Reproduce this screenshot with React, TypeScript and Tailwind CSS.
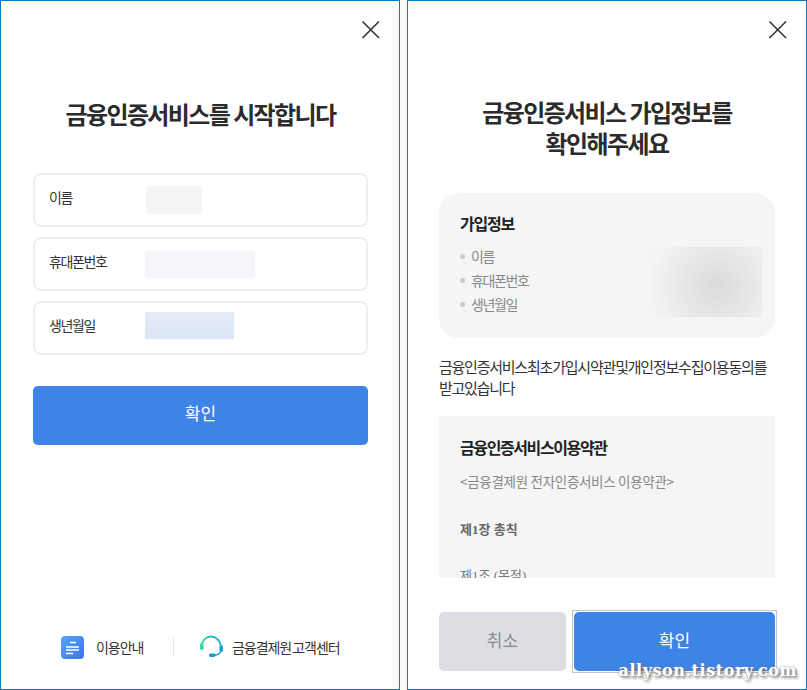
import React from 'react';

const kr = 'font-["Noto_Sans_CJK_KR","Noto_Sans",sans-serif]';

const CloseIcon: React.FC = () => (
  <svg width="20" height="20" viewBox="0 0 20 20" fill="none">
    <path d="M1.5 1.5L18 18M18 1.5L1.5 18" stroke="#333" strokeWidth="1.6" />
  </svg>
);

const Field: React.FC<{ label: string; maskClass: string }> = ({ label, maskClass }) => (
  <div className="flex items-center h-[54px] border-2 border-[#eceeef] rounded-lg pl-[14px]">
    <span className="w-[96px] pb-[5px] text-[14px] tracking-[-1.4px] text-[#333]">{label}</span>
    <div className={maskClass}></div>
  </div>
);

const DocIcon: React.FC = () => (
  <svg width="23" height="23" viewBox="0 0 23 23">
    <defs>
      <linearGradient id="doc" x1="0" y1="0" x2="1" y2="1">
        <stop offset="0" stopColor="#55a4f8" />
        <stop offset="1" stopColor="#3f74e6" />
      </linearGradient>
    </defs>
    <rect width="23" height="23" rx="4" fill="url(#doc)" />
    <path d="M9 6.5H15M5 11H18M5 14H18M5 17.5H12" stroke="#fff" strokeWidth="1.3" />
  </svg>
);

const HeadsetIcon: React.FC = () => (
  <svg width="24" height="24" viewBox="0 0 24 24" fill="none">
    <defs>
      <linearGradient id="hs" x1="0" y1="0" x2="1" y2="0">
        <stop offset="0" stopColor="#2fd99c" />
        <stop offset="1" stopColor="#12a5d0" />
      </linearGradient>
    </defs>
    <path d="M2.8 11C3 5.5 7 1.5 12 1.5C17 1.5 21 5.5 21.6 10" stroke="url(#hs)" strokeWidth="1.8" />
    <rect x="1" y="8" width="3.5" height="7" rx="1.7" fill="#2ed9a0" />
    <rect x="20.5" y="10" width="3.5" height="7" rx="1.7" fill="#12a5d0" />
    <path d="M22 16C21 19 18 20 15 20" stroke="#12a0cf" strokeWidth="1.4" />
    <rect x="10" y="18.5" width="6.5" height="3.5" rx="1.7" fill="#129fcf" />
  </svg>
);

const StartPanel: React.FC = () => (
  <div className="w-[400px] h-[690px] shrink-0 border border-[#0078c8] flex flex-col pl-[32px] pr-[31px]">
    <div className="flex justify-end pt-[19px] -mr-[13px]">
      <CloseIcon />
    </div>
    <h1 className="mt-[56px] text-center text-[24px] leading-[36px] font-bold tracking-[-1.6px] text-[#2b2b2b]">
      금융인증서비스를 시작합니다
    </h1>
    <div className="mt-[41px] flex flex-col gap-[10px]">
      <Field label="이름" maskClass="ml-[1px] w-[56px] h-[28px] bg-[#f5f5f5]" />
      <Field label="휴대폰번호" maskClass="w-[110px] h-[27px] bg-[#f5f6f9]" />
      <Field label="생년월일" maskClass="mb-[6px] w-[89px] h-[27px] bg-gradient-to-b from-[#e6ecf6] to-[#d9e5f6]" />
    </div>
    <button className="mt-[31px] h-[59px] pb-[5px] rounded-[5px] bg-[#3d84e6] text-white text-[17px]">확인</button>
    <div className="mt-auto mb-[30px] flex items-center pl-[28px] text-[14px] tracking-[-1.05px] [word-spacing:-1px] text-[#333]">
      <DocIcon />
      <span className="ml-[12px] w-[77px]">이용안내</span>
      <div className="w-[1px] h-[18px] bg-[#e6e6e6]"></div>
      <div className="ml-[25px]"><HeadsetIcon /></div>
      <span className="ml-[9px]">금융결제원 고객센터</span>
    </div>
  </div>
);

const ConfirmPanel: React.FC = () => (
  <div className="relative w-[400px] h-[690px] shrink-0 border border-[#0078c8] flex flex-col px-[31px]">
    <div className="flex justify-end pt-[19px] -mr-[13px]">
      <CloseIcon />
    </div>
    <h1 className="mt-[56px] text-center text-[24px] leading-[31px] font-bold tracking-[-1.6px] text-[#2b2b2b]">
      금융인증서비스 가입정보를
      <br />
      확인해주세요
    </h1>
    <div className="mt-[35px] h-[145px] rounded-[20px] bg-[#f5f5f5] flex justify-between items-start pl-[21px] pr-[13px] pt-[18px]">
      <div>
        <p className="text-[16px] leading-[24px] font-bold tracking-[-1.2px] text-[#222]">가입정보</p>
        <ul className="mt-[10px] flex flex-col gap-[1px] text-[14px] leading-[23px] tracking-[-1.4px] text-[#888]">
          <li className="flex items-center"><span className="w-[5px] h-[5px] rounded-full bg-[#c9c9c9] mr-[6px]"></span>이름</li>
          <li className="flex items-center"><span className="w-[5px] h-[5px] rounded-full bg-[#c9c9c9] mr-[6px]"></span>휴대폰번호</li>
          <li className="flex items-center"><span className="w-[5px] h-[5px] rounded-full bg-[#c9c9c9] mr-[6px]"></span>생년월일</li>
        </ul>
      </div>
      <div className="mt-[36px] w-[112px] h-[70px] bg-[radial-gradient(circle_at_60%_55%,#dadada,#f3f3f3_85%)]"></div>
    </div>
    <p className="mt-[18px] text-[15px] leading-[21px] tracking-[-1.25px] [word-spacing:-2px] text-[#333]">
      금융인증서비스 최초 가입시 약관 및 개인정보 수집 이용 동의를 받고있습니다
    </p>
    <div className="mt-[18px] h-[162px] overflow-hidden bg-[#f5f5f5] pl-[21px] pt-[18px]">
      <p className="text-[16px] leading-[26px] font-bold tracking-[-1.4px] text-[#222]">금융인증서비스이용약관</p>
      <p className="mt-[10px] text-[13.5px] leading-[22px] tracking-[-0.3px] text-[#888]">&lt;금융결제원 전자인증서비스 이용약관&gt;</p>
      <p className='mt-[27px] font-["Liberation_Serif","Noto_Sans_CJK_KR",serif] text-[13px] leading-[22px] font-bold text-[#666]'>제1장 총칙</p>
      <p className='mt-[24px] font-["Liberation_Serif","Noto_Sans_CJK_KR",serif] text-[13px] leading-[22px] text-[#777]'>제1조 (목적)</p>
    </div>
    <div className="mt-[34px] flex gap-[6px]">
      <button className="w-[127px] h-[59px] pb-[3px] rounded-[5px] bg-[#dcdee3] text-[#8a8a8a] text-[17px]">취소</button>
      <div className="flex-1 -my-[2px] -mr-[2px] border border-[#c4c4c4] p-[1px]">
        <button className="w-full h-[59px] pb-[3px] rounded-[5px] bg-[#3d84e6] text-white text-[17px]">확인</button>
      </div>
    </div>
    <span className='absolute right-[9px] top-[659px] font-["DejaVu_Serif",serif] font-bold text-[16px] leading-[22px] tracking-[0.55px] text-white [text-shadow:0_0_2px_#888,2px_2px_3px_#777]'>
      allyson.tistory.com
    </span>
  </div>
);

const App: React.FC = () => (
  <div className={`${kr} w-[807px] h-[690px] overflow-hidden bg-white flex gap-[7px]`}>
    <StartPanel />
    <ConfirmPanel />
  </div>
);

export default App;
